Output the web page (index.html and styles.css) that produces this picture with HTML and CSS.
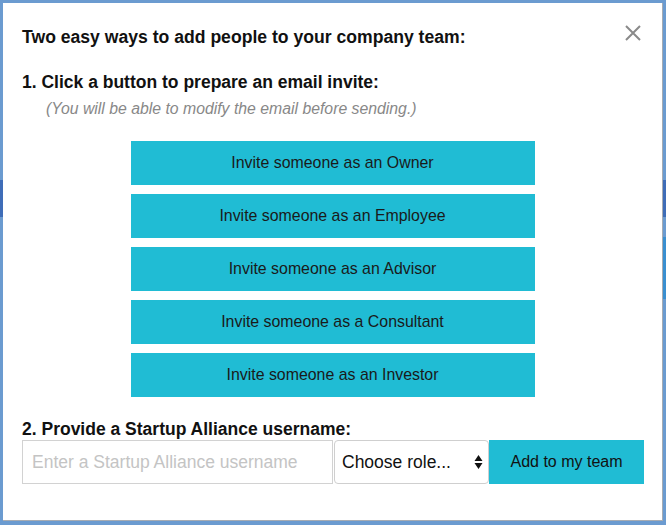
FILE: index.html
```html
<!DOCTYPE html>
<html>
<head>
<meta charset="utf-8">
<link rel="stylesheet" href="styles.css">
</head>
<body>
<div class="backdrop">
  <div class="stripe stripe-left"></div>
  <div class="stripe stripe-right1"></div>
  <div class="stripe stripe-right2"></div>
  <div class="modal">
    <button class="close" aria-label="Close">
      <svg width="18" height="18" viewBox="0 0 18 18"><path d="M2 2 L16 16 M16 2 L2 16" stroke="#8a8a8a" stroke-width="2" fill="none"/></svg>
    </button>
    <h1 class="title">Two easy ways to add people to your company team:</h1>
    <h2 class="step step-one">1. Click a button to prepare an email invite:</h2>
    <p class="note">(You will be able to modify the email before sending.)</p>
    <div class="invites">
      <button class="invite">Invite someone as an Owner</button>
      <button class="invite">Invite someone as an Employee</button>
      <button class="invite">Invite someone as an Advisor</button>
      <button class="invite">Invite someone as a Consultant</button>
      <button class="invite">Invite someone as an Investor</button>
    </div>
    <h2 class="step step-two">2. Provide a Startup Alliance username:</h2>
    <div class="add-row">
      <input class="username" type="text" placeholder="Enter a Startup Alliance username">
      <div class="select">
        <span>Choose role...</span>
        <svg width="9" height="16" viewBox="0 0 9 16"><path d="M4.5 1 L8.5 7 H0.5 Z M0.5 9 H8.5 L4.5 15 Z" fill="#111"/></svg>
      </div>
      <button class="add">Add to my team</button>
    </div>
  </div>
</div>
</body>
</html>
```
FILE: styles.css
```css
* { box-sizing: border-box; }
html, body { margin: 0; padding: 0; }
body {
  width: 666px;
  height: 525px;
  overflow: hidden;
  font-family: "Liberation Sans", Arial, sans-serif;
  background: #6b9bd0;
}
.backdrop {
  position: relative;
  width: 666px;
  height: 525px;
  padding: 3px 3px 4px 3px;
}
.stripe { position: absolute; }
.stripe-left { left: 0; top: 180px; width: 3px; height: 37px; background: #3f6db8; }
.stripe-right1 { right: 0; top: 180px; width: 4px; height: 37px; background: #3f6db8; }
.stripe-right2 { right: 0; top: 237px; width: 4px; height: 62px; background: #3a8fd0; }
.modal {
  position: relative;
  width: 660px;
  height: 518px;
  background: #fff;
  border-right: 1px solid #a7acb3;
  border-bottom: 1px solid #a7acb3;
  padding: 24px 18px 0 19px;
}
.close {
  position: absolute;
  top: 21px;
  right: 20px;
  border: 0;
  background: none;
  padding: 0;
  width: 18px;
  height: 18px;
}
.close svg { display: block; }
.title {
  margin: 0;
  font-size: 17.6px;
  font-weight: bold;
  color: #111;
  line-height: 20px;
}
.step {
  margin: 0;
  font-size: 17.5px;
  font-weight: bold;
  color: #111;
  line-height: 20px;
}
.step-one { margin-top: 25px; }
.note {
  margin: 8px 0 0 24px;
  font-size: 15.8px;
  font-style: italic;
  color: #888;
  line-height: 18px;
}
.invites {
  display: flex;
  flex-direction: column;
  align-items: center;
  gap: 9px;
  margin-top: 23px;
  padding-right: 1px;
}
.invite {
  width: 404px;
  height: 44px;
  border: 0;
  background: #20bcd4;
  color: #1a1a1a;
  font-family: "Liberation Sans", Arial, sans-serif;
  font-size: 15.9px;
  padding: 0;
}
.step-two { margin-top: 22px; }
.add-row {
  display: flex;
  margin-top: 1px;
  height: 44px;
}
.username {
  width: 311px;
  height: 44px;
  border: 1px solid #d2d2d2;
  padding: 0 9px;
  font-family: "Liberation Sans", Arial, sans-serif;
  font-size: 17.5px;
  color: #333;
  outline: none;
}
.username::placeholder { color: #c4c4c4; }
.select {
  width: 155px;
  height: 44px;
  margin-left: 1px;
  border: 1px solid #cfcfcf;
  border-radius: 4px;
  display: flex;
  align-items: center;
  justify-content: space-between;
  padding: 0 5px 0 7px;
  font-size: 17.5px;
  color: #111;
}
.select svg { display: block; }
.add {
  width: 155px;
  height: 44px;
  border: 0;
  background: #20bcd4;
  color: #111;
  font-family: "Liberation Sans", Arial, sans-serif;
  font-size: 16px;
  padding: 0;
}
```
